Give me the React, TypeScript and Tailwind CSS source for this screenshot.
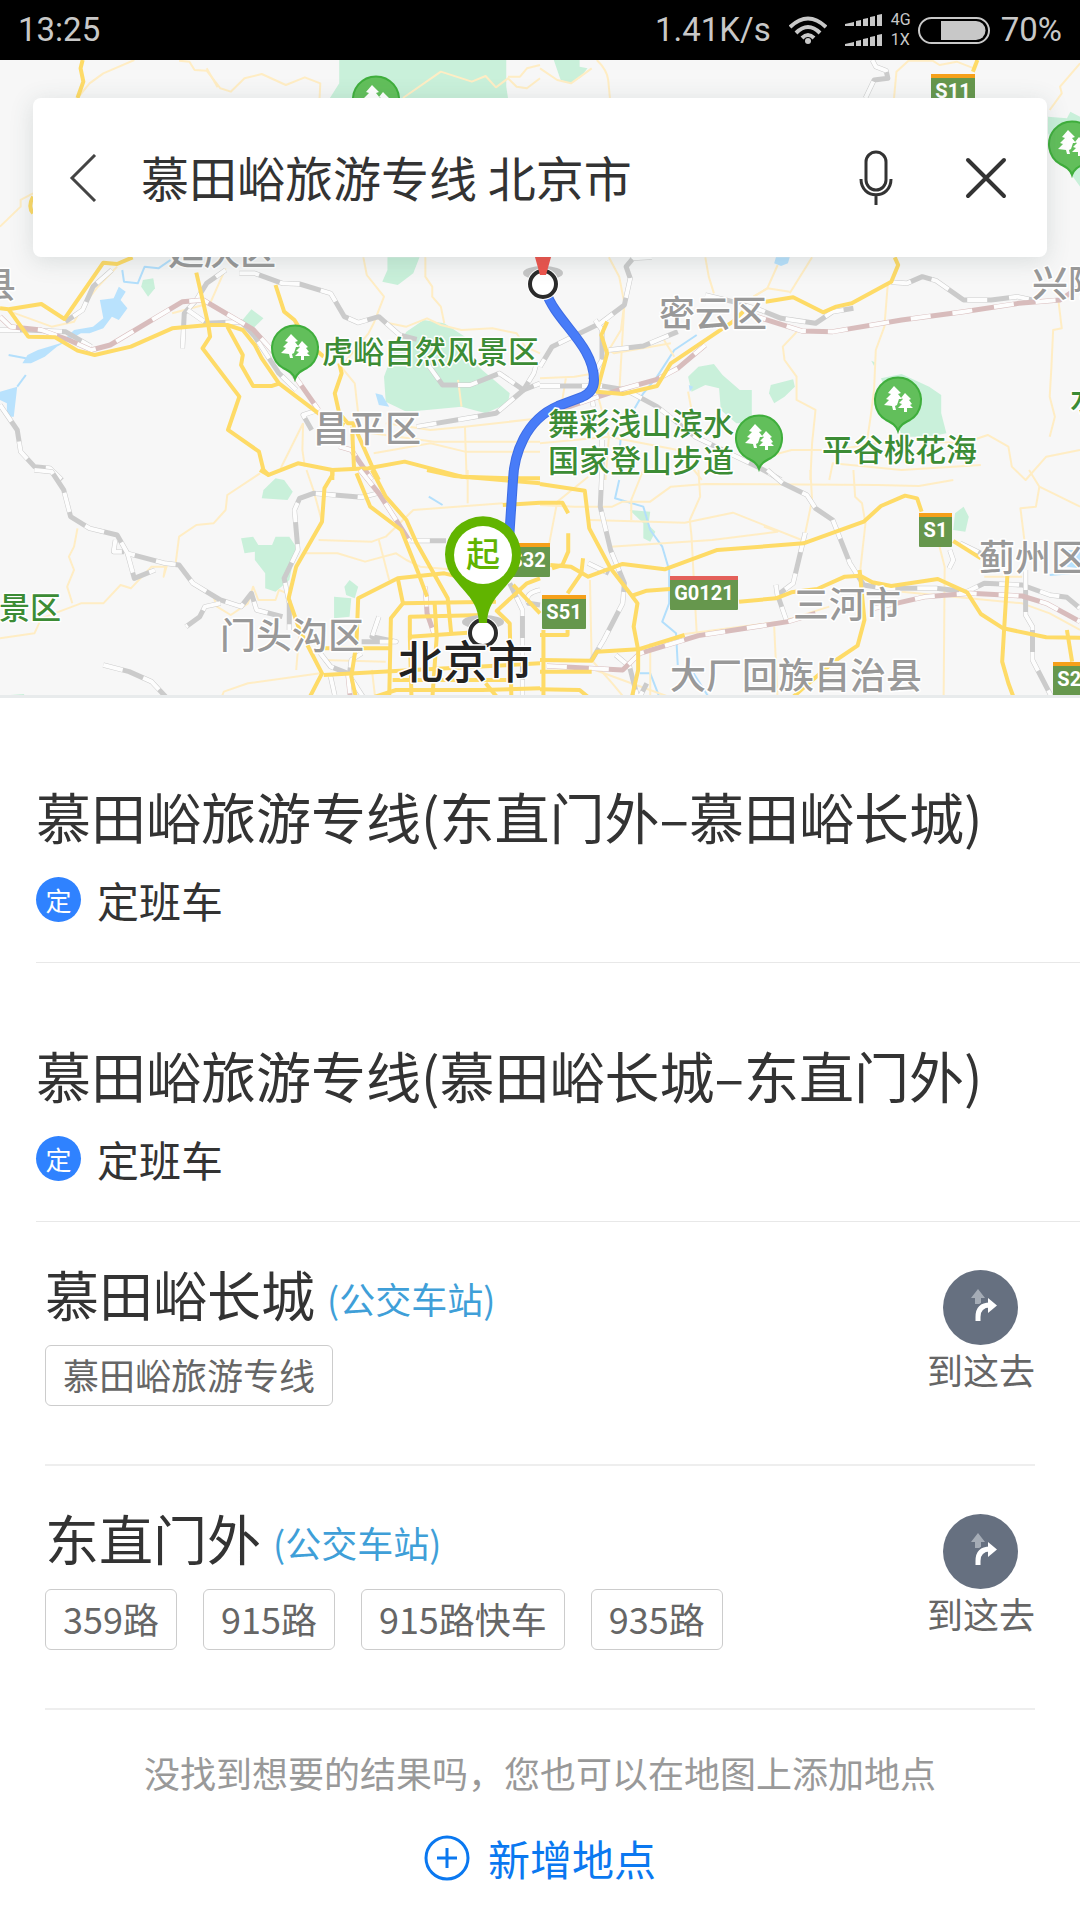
import { useState } from "react";

type Tile = {
  x: number;
  y: number;
  parks?: string[];
  lakes?: string[];
  streams?: string[];
  minor?: string[];
  rail?: string[];
  redRail?: string[];
  major?: string[];
};

// Every tile holds its own coordinates, 1568 units across 540 map pixels.
const TILES: Tile[] = [
  {
    x: 0,
    y: 0,
    parks: ["M985 180H1470V260L1475 294H958L985 250z"],
    minor: [
      "M225 294L260 250 300 220 390 180",
      "M520 182L550 185 565 210 600 212 640 265 670 275 710 235 760 222 830 255 885 232 930 250 928 294",
      "M600 205L632 262",
      "M1170 294L1280 215 1370 245 1410 228 1440 262 1475 235 1500 260 1530 265 1568 235",
      "M1475 230L1510 230 1530 205 1568 195",
      "M0 680L60 620 60 600 96 580",
    ],
    major: ["M240 180L234 205 242 245 225 294", "M96 590Q80 620 96 640"],
  },
  {
    x: 540,
    y: 0,
    parks: [
      "M40 180L60 240 90 250 115 235 138 205 115 200 115 180z",
      "M1475 350L1530 355 1540 335 1568 350V560L1540 520 1475 400z",
    ],
    minor: [
      "M0 205L50 240 90 250 150 205",
      "M165 180Q195 210 198 240L203 294",
      "M1028 294L1035 215 1070 182 1140 182 1160 195 1210 185 1260 205",
      "M1568 190L1510 260 1515 280 1480 330",
    ],
    rail: ["M965 180L975 200 1005 212 1010 235 970 240 945 294"],
    major: ["M1270 180L1257 215"],
  },
  {
    x: 0,
    y: 250,
    parks: [
      "M1125 22H1218L1200 70 1155 105 1110 95 1125 60z",
      "M730 178L765 205 735 235 700 215z",
      "M1180 245L1230 210 1290 220 1350 260 1350 310 1400 360 1480 430 1475 460 1410 490 1340 470 1240 480 1180 485 1120 455 1115 380 1140 310z",
      "M415 90L445 85 450 115 430 140 410 110z",
    ],
    lakes: [
      "M345 110L365 125 350 150 370 175 345 210 325 200 300 235 260 250 235 250 200 270 165 290 130 320 90 340 65 340 80 315 110 300 175 280 215 240 270 230 300 205 290 150 330 145z",
      "M0 425L50 410 40 500 20 500 20 460 0 450z",
      "M1090 430L1110 435 1130 470 1100 465z",
    ],
    streams: ["M355 60L360 95 400 100 420 50 460 55 495 30", "M75 375L50 410", "M25 315L75 325"],
    minor: [
      "M30 185L150 230 215 215 240 170 280 115 340 50",
      "M655 55L610 160 500 190",
      "M1055 22L1065 75 1115 140 1085 220 1070 250 990 350 1030 400 1040 490 1020 600",
      "M1235 22L1235 80 1255 110 1255 140 1280 170 1290 220",
      "M1085 200L1130 220 1180 230 1240 205 1280 225 1340 240 1430 235 1500 250 1525 290 1568 310",
      "M880 520L815 655",
      "M880 520L878 600 885 650",
      "M1050 545L1260 575 1568 575",
      "M1120 520L1250 540 1350 530 1568 505",
      "M1085 610L1250 580 1350 605 1568 605",
      "M1350 530L1355 690",
      "M1330 390L1340 470",
    ],
    rail: [
      "M0 240L80 240 190 245 265 290",
      "M325 60L270 110 240 180 190 215",
      "M530 295L535 190 570 150 600 100 655 60",
      "M545 180L600 220 700 215 740 260 810 370 860 420",
      "M695 70L740 70 820 100 870 102 960 130 1000 200 1040 218 1100 200 1160 255 1210 268",
      "M1240 340L1285 405 1365 405 1450 370 1520 420 1568 400",
      "M1210 530L1355 505 1440 490 1520 420 1550 370 1558 340",
      "M0 465L50 540 60 605 100 650 145 655 180 690",
      "M925 480L880 495 905 540",
    ],
    redRail: [
      "M0 200L30 230 120 240 200 270 265 300 320 285 530 155 590 150 735 238 850 370 925 480",
      "M985 590L1020 600 1080 690",
    ],
    major: [
      "M0 175L25 178 120 162 187 207 300 38 340 42 385 22",
      "M25 178L82 260 160 262 225 302 275 315 380 290 500 235 605 225 660 225 705 240 740 285 760 325 810 400 925 490 1000 525",
      "M570 68L605 225 610 260 588 295 695 440 662 540 752 605 765 660 780 675 865 640 965 660 1070 655 1175 635 1340 680 1480 685 1568 685",
      "M800 105L825 185 855 210 870 235",
      "M905 290L940 320",
      "M985 340L992 370 972 430 985 490 1010 520 1025 520 1085 660 1100 690",
      "M660 230L705 315 700 345 735 408 790 408 812 400",
      "M1022 530L1028 655",
      "M965 660V690",
    ],
  },
  {
    x: 540,
    y: 250,
    parks: [
      "M430 380L460 350 505 342 530 375 580 420 615 420 615 520 570 520 525 480 520 415 480 405 440 425z",
      "M670 405L735 388 740 410 710 440 680 460 665 430z",
      "M990 385L1050 372 1130 410 1165 435 1165 490 1180 550 1130 560 1100 560 1050 560 1040 520z",
      "M962 332L975 338 970 348z",
    ],
    lakes: ["M685 22H725L720 40 700 48 680 40z", "M432 405L445 410 435 425z"],
    streams: ["M455 255L390 300 340 380 300 430 275 475", "M235 560L232 590"],
    minor: [
      "M200 22L230 80 245 160 235 240 200 300 215 310 380 280",
      "M480 22L490 80 505 130",
      "M790 22L725 130",
      "M690 45L660 115 620 140",
      "M620 140L660 115 725 125",
      "M360 270L390 320",
      "M1010 100L1000 230 975 300 970 420 960 500 950 570",
      "M755 235L705 290 710 330 745 380 745 450 800 480 790 580 785 690",
      "M245 160L230 430",
      "M1505 150L1515 235 1490 240 1485 350 1480 440 1495 500 1480 560",
      "M660 620L730 600 850 600 1050 570 1230 580 1300 555 1360 590 1370 650 1410 690 1470 620 1568 600",
      "M840 690L850 640 1050 660 1280 645",
      "M0 385L100 380 160 370",
      "M165 425L200 560 190 690",
      "M430 425L440 480",
      "M60 480L75 385",
      "M0 580L200 560 400 600 470 690",
    ],
    rail: [
      "M325 22L270 25 250 50 262 85 245 165 175 220 35 290 0 350",
      "M160 210L180 240 180 330 145 390",
      "M200 300L300 288 400 245",
      "M480 135L560 155 640 180 700 205 800 220 850 185 910 175",
      "M1020 97L1065 100 1110 80 1150 92 1230 150 1310 150 1385 140 1430 150",
      "M0 408H180L250 420 340 470 450 560 640 655 700 690",
      "M150 440L155 470",
      "M180 570V690",
    ],
    redRail: [
      "M0 500L170 440 230 420 340 388 400 355 480 285",
      "M600 190L760 243 850 245 1050 210 1230 185 1390 160 1510 150 1568 110",
    ],
    major: [
      "M1030 22L1040 45 1020 95 905 160 860 170 822 187 735 142 655 155",
      "M590 185L560 215 380 340 340 408 240 432 165 425 195 310 178 255 195 215",
    ],
  },
  {
    x: 0,
    y: 470,
    parks: [
      "M765 60L800 25 825 30 850 65 835 90 760 85z",
      "M700 205L735 200 750 225 790 225 800 200 840 200 860 230 840 330 800 365 770 355 770 310 740 270 740 245 710 250z",
      "M1000 350L1015 330 1040 350 1030 385 1005 375z",
      "M970 380L1020 385 1015 440 970 445z",
      "M0 690L20 676 70 672 70 690z",
    ],
    streams: ["M1245 80L1285 105"],
    minor: [
      "M755 10L660 75 655 120 620 160 570 165 520 200 510 280",
      "M0 505L100 490 120 445 235 400 300 400 350 345 380 355 440 290 480 290 475 320 485 285 520 285 550 330 620 380 630 410 670 435 720 400 735 350 750 390 800 390 810 360 835 370",
      "M225 175L215 230 200 260 215 300 195 350 210 400",
      "M890 0L910 60 935 155",
      "M925 210L1080 215 1120 200 1200 120 1460 100",
      "M885 250L980 250 1060 275 1150 250 1180 270 1220 290 1330 300",
      "M1358 0V100",
      "M640 690L650 665 720 640 930 610",
      "M870 480L860 600",
      "M940 570L1120 575",
      "M1100 210L1130 330",
      "M1090 690L1080 600",
    ],
    rail: [
      "M100 0L150 5 185 60 205 140 260 175 340 195 370 250 480 280 520 285 560 340 640 390 700 410 730 370 745 420 820 440",
      "M370 250L390 325 450 300",
      "M640 400L595 410 580 440 540 470",
      "M335 210L330 245 360 245",
      "M300 585L375 605 440 635 490 690",
      "M1095 70L1050 82 910 70 870 85 855 120 865 240 825 325 840 400 840 480",
      "M1190 212H1295",
      "M1100 440L1080 500 1150 515 1050 515",
      "M930 550L960 590 1010 610 1060 690",
      "M1050 550L1020 570 1015 610",
      "M1517 690V420L1480 340",
      "M1568 360Q1520 370 1535 400L1568 405",
      "M960 620L975 690",
    ],
    redRail: ["M1045 0L1100 70 1150 150 1190 215", "M1235 350L1240 430 1260 490", "M1010 610L1018 690"],
    major: [
      "M755 0L780 15",
      "M965 0L965 15 942 55 935 155 860 290 838 385 870 480 935 610 895 690",
      "M1080 0L1120 80 1180 150 1210 220 1300 385 1310 490",
      "M1035 10L1075 110 1165 180 1215 310 1240 380",
      "M1240 0L1320 18 1568 40",
      "M1460 105L1568 98",
      "M1330 320L1290 310 1155 325 1040 385 1035 520 1020 620 1035 690",
      "M1170 400L1440 395",
      "M1155 325L1170 400 1135 445 1130 690",
      "M1400 485L1190 500V440L1410 435",
      "M1262 400L1268 500 1255 690",
      "M940 615L1200 600 1568 580",
      "M940 535H1135",
      "M1190 500L1195 690",
      "M1060 690L1150 660 1400 660 1568 655",
      "M1440 420L1480 460 1485 690",
      "M1440 425L1530 340 1568 325",
      "M1490 345L1568 430",
      "M1140 630H1480",
      "M1410 640L1450 690",
    ],
  },
  {
    x: 540,
    y: 470,
    parks: [
      "M260 120L320 125 315 165 335 185 320 215 300 205 300 160z",
      "M1205 130L1230 110 1245 140 1235 185 1200 180z",
    ],
    lakes: ["M1530 240L1568 240V295L1530 290z"],
    streams: [
      "M230 30L218 85 300 110 320 180 355 230 375 300 375 400 355 455 395 490 400 585",
      "M290 610H320L350 690",
      "M440 600L495 690",
      "M1480 315L1540 310",
    ],
    minor: [
      "M140 20L50 95 25 230",
      "M0 105L100 110 210 110 240 95 320 95 380 50 480 42 980 45 1100 48 1200 30",
      "M300 0L265 90 265 150",
      "M460 0L465 80 435 150 440 200 455 490",
      "M145 150L420 158 560 128 760 210",
      "M205 230L500 210 690 185 650 170",
      "M785 0L790 90 770 190",
      "M910 0L915 80 935 100 945 160 930 300",
      "M420 492L700 455 840 410",
      "M1420 0L1450 50 1568 110",
      "M1450 50L1440 110 1395 115 1410 240",
      "M1160 230L1175 290 1172 690",
      "M680 470L690 690",
      "M1050 365L1400 400 1480 430 1568 480",
      "M145 330L150 570 210 640 250 690",
      "M320 520V690",
      "M160 600L265 640 400 690",
      "M1290 320H1400",
    ],
    rail: [
      "M180 0L175 110 205 240 245 340 240 400 185 510 150 570",
      "M140 280L200 310",
      "M660 0L705 40 775 75 800 115 850 150 900 280 940 345 1000 355 1150 355 1240 365 1290 340 1400 345 1480 375 1530 382 1568 415",
      "M770 188L735 340 690 375 715 450",
      "M685 345L690 380",
      "M1190 240L1200 270 1188 295",
      "M1220 220L1280 250",
      "M1410 300L1410 435 1430 470 1430 570 1490 690",
      "M220 555L260 590 285 690 310 640",
    ],
    redRail: [
      "M20 588L240 600 290 550 460 497 720 455 800 430",
      "M970 415L1120 380 1250 370 1400 378 1470 400 1568 455",
    ],
    major: [
      "M0 42L130 62 143 175 205 295 265 375 283 400 272 470 285 540 285 600 265 690",
      "M0 98L65 98 82 130",
      "M82 190L82 245 65 285 35 295",
      "M30 285L90 290 140 320 240 282 362 298 515 240 765 220 940 155 990 108 1060 77 1095 85 1108 125",
      "M125 265L120 310 80 370",
      "M265 378L310 362 378 357",
      "M578 395L685 385 730 367 805 357 885 320 930 317 965 337 1020 348 1155 327 1240 367 1280 432 1345 475 1470 502 1568 503",
      "M1200 213L1280 265",
      "M928 300L942 450 922 527 860 570 780 640 725 690",
      "M1357 318L1342 575 1360 640 1378 690",
      "M1530 480L1545 575",
      "M0 495H80V480",
      "M0 570L150 572 165 545 285 538 420 495",
      "M0 605H150",
      "M10 480V690",
      "M0 658L115 660 150 690",
    ],
  },
];

const ROUTE = "M546 292C556 322 594 345 594 380Q594 392 582 397L558 406C525 420 514 455 513 480L509 540";

const AREA_LABELS = [
  { text: "延庆区", x: 168, y: 265 },
  { text: "县", x: -20, y: 298 },
  { text: "昌平区", x: 313, y: 442 },
  { text: "密云区", x: 659, y: 327 },
  { text: "兴隆", x: 1032, y: 297 },
  { text: "门头沟区", x: 220, y: 649 },
  { text: "三河市", x: 793, y: 618 },
  { text: "大厂回族自治县", x: 670, y: 689 },
  { text: "蓟州区", x: 979, y: 571 },
];

const PARK_LABELS = [
  { text: "虎峪自然风景区", x: 322, y: 363 },
  { text: "舞彩浅山滨水", x: 548, y: 435 },
  { text: "国家登山步道", x: 548, y: 472 },
  { text: "平谷桃花海", x: 822, y: 461 },
  { text: "景区", x: -1, y: 619 },
  { text: "水", x: 1070, y: 410 },
];

const PARK_PINS = [
  { x: 376, y: 99 },
  { x: 1072, y: 144 },
  { x: 295, y: 348 },
  { x: 898, y: 400 },
  { x: 759, y: 438 },
];

const SHIELDS = [
  { text: "S11", x: 931, y: 74, width: 44, bar: "#f5a01a" },
  { text: "S32", x: 506, y: 543, width: 44, bar: "#f5a01a" },
  { text: "S51", x: 542, y: 595, width: 44, bar: "#f5a01a" },
  { text: "S1", x: 919, y: 513, width: 33, bar: "#f5a01a" },
  { text: "G0121", x: 670, y: 576, width: 68, bar: "#e4605a" },
  { text: "S26", x: 1053, y: 662, width: 44, bar: "#f5a01a" },
];

const LINES = [
  { title: "慕田峪旅游专线(东直门外–慕田峪长城)", kind: "定班车" },
  { title: "慕田峪旅游专线(慕田峪长城–东直门外)", kind: "定班车" },
];

const STATIONS = [
  { name: "慕田峪长城", type: "(公交车站)", routes: ["慕田峪旅游专线"] },
  { name: "东直门外", type: "(公交车站)", routes: ["359路", "915路", "915路快车", "935路"] },
];

function Lines({ paths, color, width, dash }: { paths?: string[]; color: string; width: number; dash?: string }) {
  return (
    <g fill="none" stroke={color} strokeWidth={width} strokeDasharray={dash} strokeLinejoin="round">
      {paths?.map((d) => (
        <path key={d} d={d} vectorEffect="non-scaling-stroke" />
      ))}
    </g>
  );
}

function MapTile({ tile }: { tile: Tile }) {
  return (
    <g transform={`translate(${tile.x} ${tile.y}) scale(0.3444 0.3333)`}>
      <g fill="#c9f0da">
        {tile.parks?.map((d) => (
          <path key={d} d={d} />
        ))}
      </g>
      <g fill="#b9e2fd">
        {tile.lakes?.map((d) => (
          <path key={d} d={d} />
        ))}
      </g>
      <Lines paths={tile.streams} color="#b3dffc" width={2} />
      <Lines paths={tile.minor} color="#ffedc4" width={2} />
      <Lines paths={tile.rail} color="#cbcbcb" width={5} />
      <Lines paths={tile.rail} color="#fdfdfd" width={4} dash="20 22" />
      <Lines paths={tile.redRail} color="#d8bcbc" width={5} />
      <Lines paths={tile.redRail} color="#fdfdfd" width={4} dash="20 22" />
      <Lines paths={tile.major} color="#fedb67" width={4} />
    </g>
  );
}

function ParkPin({ x, y }: { x: number; y: number }) {
  return (
    <g transform={`translate(${x} ${y})`}>
      <path
        d="M0 31C-2 25-6 23-12 20A23 23 0 1 1 12 20C6 23 2 25 0 31z"
        fill="#62bf5b"
        stroke="#3fae3c"
        strokeWidth="2"
      />
      <path d="M-4-14L3-7 0-6 4-1 1-1-1 5-3 6-2 10-5 10-6 6-14 5-9 0-12-1-7-6-10-7z" fill="#fff" />
      <path d="M7-7L13-1 11 0 14 4 12 5 15 8 9 8 9 12 6 12 6 8 0 8 4 4 1 3 5-1 3-2z" fill="#fff" />
    </g>
  );
}

function MapView() {
  return (
    <svg
      viewBox="0 60 1080 638"
      preserveAspectRatio="xMidYMid slice"
      className="block aspect-[1080/638] w-full bg-[#f7f7f7]"
      role="img"
      aria-label="地图"
    >
      {TILES.map((tile) => (
        <MapTile key={`${tile.x}-${tile.y}`} tile={tile} />
      ))}

      {SHIELDS.map((shield) => (
        <g key={shield.text} transform={`translate(${shield.x} ${shield.y})`}>
          <rect width={shield.width} height="34" rx="1" fill="#66974d" />
          <rect width={shield.width} height="4" fill={shield.bar} />
          <text
            x={shield.width / 2}
            y="24"
            textAnchor="middle"
            fill="#fff"
            className="font-['Roboto',sans-serif] text-[20px] font-bold"
          >
            {shield.text}
          </text>
        </g>
      ))}

      <g fill="none">
        <path d={ROUTE} stroke="#3d6ce4" strokeWidth="10" />
        <path d={ROUTE} stroke="#487cf8" strokeWidth="8" />
      </g>

      <g stroke="#fff" strokeWidth="3" strokeLinejoin="round" className="[paint-order:stroke]">
        <g fill="#999" className="text-[36px] font-medium">
          {AREA_LABELS.map((label) => (
            <text key={label.text} x={label.x} y={label.y}>
              {label.text}
            </text>
          ))}
        </g>
        <g fill="#3c8c35" className="text-[31px] font-medium">
          {PARK_LABELS.map((label) => (
            <text key={label.text} x={label.x} y={label.y}>
              {label.text}
            </text>
          ))}
        </g>
      </g>

      {PARK_PINS.map((pin) => (
        <ParkPin key={pin.x} x={pin.x} y={pin.y} />
      ))}

      {/* destination */}
      <ellipse cx="543" cy="273" rx="20" ry="7" fill="#c6c6c6" />
      <circle cx="543" cy="284" r="16" fill="#fff" />
      <circle cx="543" cy="284" r="13" fill="#fff" stroke="#2b2b2b" strokeWidth="4" />
      <path d="M533 250H553L546 275H540z" fill="#ee544c" />

      {/* start */}
      <ellipse cx="483" cy="622" rx="21" ry="7" fill="#c6c6c6" />
      <circle cx="483" cy="633" r="16" fill="#fff" />
      <circle cx="483" cy="633" r="13" fill="#fff" stroke="#2b2b2b" strokeWidth="4" />
      <text
        x="398"
        y="679"
        fill="#222"
        stroke="#fff"
        strokeWidth="3"
        strokeLinejoin="round"
        className="text-[45px] font-medium [paint-order:stroke]"
      >
        北京市
      </text>
      <path
        d="M479 623C478 602 467 595 456 581A38 38 0 1 1 510 581C499 595 488 602 487 623z"
        fill="#61b400"
      />
      <circle cx="483" cy="555" r="29" fill="#fff" />
      <text x="483" y="567" textAnchor="middle" fill="#61b400" className="text-[34px] font-medium">
        起
      </text>

      <rect y="695" width="1080" height="3" fill="#e8ebec" />
    </svg>
  );
}

function SignalBars() {
  return (
    <svg viewBox="0 0 38 12" className="h-3 w-[38px]" fill="#c8c8c8">
      <path d="M0 12V10L9 8V12zM11 12V7L16 6V12zM18 12V5L23 4V12zM25 12V3L30 2V12zM32 12V1L37 0V12z" />
    </svg>
  );
}

function StatusBar() {
  return (
    <div className="flex h-[60px] items-center justify-between bg-black px-[18px] font-['Roboto',sans-serif] text-[33px] leading-10 text-[#c8c8c8]">
      <span>13:25</span>
      <div className="flex items-center">
        <span>1.41K/s</span>
        <svg viewBox="0 0 38 28" className="ml-[18px] h-7 w-[38px]" fill="none" stroke="#c8c8c8" strokeWidth="4">
          <path d="M1 11Q19-6 37 11M7 17Q19 5 31 17M13 22Q19 16 25 22" />
          <circle cx="19" cy="25" r="3" fill="#c8c8c8" stroke="none" />
        </svg>
        <div className="ml-[18px] flex flex-col gap-2">
          <SignalBars />
          <SignalBars />
        </div>
        <div className="ml-2 flex w-[22px] flex-col text-base leading-5">
          <span>4G</span>
          <span>1X</span>
        </div>
        <svg viewBox="0 0 72 27" className="ml-[5px] h-[27px] w-[72px]">
          <rect x="1" y="1" width="70" height="25" rx="12.5" fill="none" stroke="#c8c8c8" strokeWidth="2" />
          <path d="M23 4H58A9.5 9.5 0 0 1 58 23H23z" fill="#c8c8c8" />
        </svg>
        <span className="ml-[11px]">70%</span>
      </div>
    </div>
  );
}

function SearchBar() {
  const [query, setQuery] = useState("慕田峪旅游专线 北京市");

  return (
    <form
      onSubmit={(e) => e.preventDefault()}
      className="absolute inset-x-[33px] top-[38px] flex h-[159px] items-center rounded-lg bg-white pr-10 pl-9 shadow-[0_4px_24px_rgba(60,90,90,0.16)]"
    >
      <button type="button" aria-label="返回">
        <svg viewBox="0 0 28 48" className="h-12 w-7" fill="none" stroke="#444" strokeWidth="3">
          <path d="M26 1L3 24L26 47" />
        </svg>
      </button>
      <input
        aria-label="搜索"
        value={query}
        onChange={(e) => setQuery(e.target.value)}
        className="ml-11 min-w-0 flex-1 bg-transparent pb-1 text-[48px] leading-[64px] text-[#333] outline-none"
      />
      <button type="button" aria-label="语音">
        <svg viewBox="0 0 34 56" className="h-14 w-[34px]" fill="none" stroke="#333" strokeWidth="3">
          <rect x="7" y="2" width="20" height="38" rx="10" />
          <path d="M2 29C2 50 32 50 32 29M17 45V55" />
        </svg>
      </button>
      <button type="button" aria-label="清除" onClick={() => setQuery("")} className="ml-[72px]">
        <svg viewBox="0 0 42 42" className="size-[42px]" fill="none" stroke="#333" strokeWidth="4" strokeLinecap="round">
          <path d="M3 3L39 39M39 3L3 39" />
        </svg>
      </button>
    </form>
  );
}

function DirectionsButton() {
  return (
    <button type="button" className="mt-2 flex shrink-0 flex-col items-center gap-[3px]">
      <svg viewBox="0 0 75 75" className="size-[75px]">
        <circle cx="37.5" cy="37.5" r="37.5" fill="#667080" />
        <path d="M35 19L42 28H38V34H32V28H28z" fill="#a5acb6" />
        <path d="M35 51V47Q35 35 47 35" fill="none" stroke="#667080" strokeWidth="8" />
        <path d="M35 51V47Q35 35 47 35" fill="none" stroke="#fff" strokeWidth="5" />
        <path d="M45 28L54 35.5L45 43z" fill="#fff" />
      </svg>
      <span className="text-[36px] leading-[42px] text-[#666]">到这去</span>
    </button>
  );
}

export default function App() {
  return (
    <div className="min-h-screen bg-white font-['Noto_Sans_CJK_SC',sans-serif] text-[#333]">
      <StatusBar />

      <section className="relative">
        <MapView />
        <SearchBar />
      </section>

      <main>
        <ul className="pt-[6px] pl-9">
          {LINES.map((line) => (
            <li key={line.title} className="border-b border-[#e8e8e8] pt-[79px] pb-10">
              <h2 className="text-[55px] leading-[64px] whitespace-nowrap">{line.title}</h2>
              <div className="mt-[30px] flex h-[45px] items-center gap-4">
                <span className="flex size-[45px] items-center justify-center rounded-full bg-[#2f82ff] text-[26px] leading-8 text-white">
                  定
                </span>
                <span className="text-[42px] leading-[45px]">{line.kind}</span>
              </div>
            </li>
          ))}
        </ul>

        <ul className="px-[45px]">
          {STATIONS.map((station) => (
            <li
              key={station.name}
              className="flex items-start justify-between border-b-2 border-[#eee] pt-10 pb-[58px]"
            >
              <div>
                <h2 className="flex items-end gap-3 text-[54px] leading-[64px]">
                  {station.name}
                  <span className="text-[36px] leading-[56px] text-[#3f9fd8]">{station.type}</span>
                </h2>
                <div className="mt-[19px] flex gap-[26px]">
                  {station.routes.map((route) => (
                    <a
                      key={route}
                      href="#"
                      className="flex h-[61px] items-center rounded-md border border-[#ccc] px-[17px] pb-1 text-[36px] leading-[44px] text-[#666]"
                    >
                      {route}
                    </a>
                  ))}
                </div>
              </div>
              <DirectionsButton />
            </li>
          ))}
        </ul>

        <div className="flex flex-col items-center pt-10">
          <p className="text-[36px] leading-[44px] text-[#999]">没找到想要的结果吗，您也可以在地图上添加地点</p>
          <button type="button" className="mt-10 flex h-12 items-center gap-[18px] text-[42px] leading-[48px] text-[#0a78f0]">
            <svg viewBox="0 0 46 46" className="size-[46px]" fill="none" stroke="currentColor" strokeWidth="3">
              <circle cx="23" cy="23" r="21" />
              <path d="M13 23H33M23 13V33" />
            </svg>
            新增地点
          </button>
        </div>
      </main>
    </div>
  );
}
